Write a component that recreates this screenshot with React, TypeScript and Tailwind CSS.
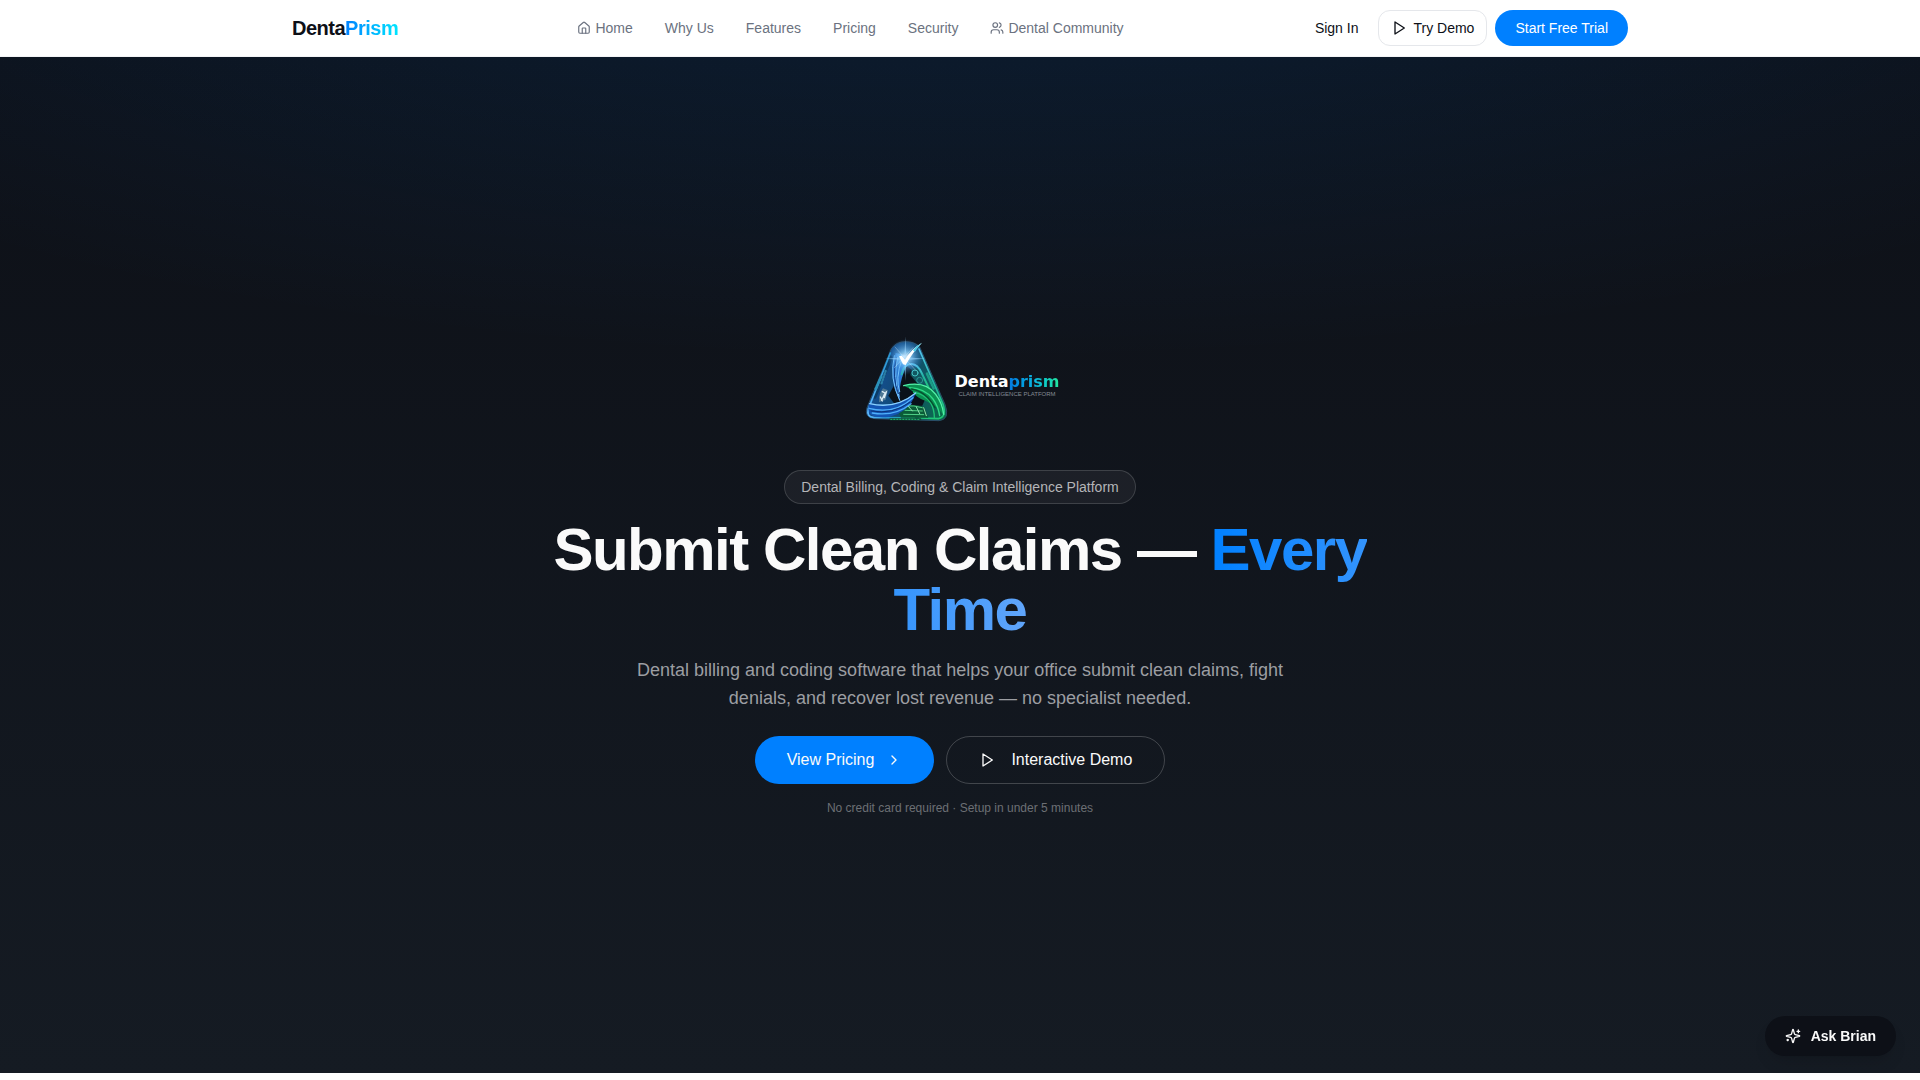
import { ChevronRight, House, Users } from "lucide-react";

const navLinks = [
  { label: "Home", icon: House },
  { label: "Why Us" },
  { label: "Features" },
  { label: "Pricing" },
  { label: "Security" },
  { label: "Dental Community", icon: Users },
];

const PlayIcon = () => (
  <svg
    width="16"
    height="16"
    viewBox="0 0 24 24"
    fill="none"
    stroke="currentColor"
    strokeWidth="2"
    strokeLinecap="round"
    strokeLinejoin="round"
    aria-hidden="true"
  >
    <polygon points="6 3 20 12 6 21 6 3" />
  </svg>
);

const SparklesIcon = () => (
  <svg
    width="16"
    height="16"
    viewBox="0 0 24 24"
    fill="none"
    stroke="currentColor"
    strokeWidth="2"
    strokeLinecap="round"
    strokeLinejoin="round"
    aria-hidden="true"
  >
    <path d="M9.937 15.5A2 2 0 0 0 8.5 14.063l-6.135-1.582a.5.5 0 0 1 0-.962L8.5 9.936A2 2 0 0 0 9.937 8.5l1.582-6.135a.5.5 0 0 1 .963 0L14.063 8.5A2 2 0 0 0 15.5 9.937l6.135 1.581a.5.5 0 0 1 0 .964L15.5 14.063a2 2 0 0 0-1.437 1.437l-1.582 6.135a.5.5 0 0 1-.963 0z" />
    <path d="M20 3v4" />
    <path d="M22 5h-4" />
    <path d="M4 17v2" />
    <path d="M5 18H3" />
  </svg>
);

const PrismMark = () => (
  <svg width="88" height="96" viewBox="30 15 264 288" fill="none" strokeLinecap="round" aria-hidden="true">
    <defs>
      <linearGradient id="body" x1="0" y1="0.4" x2="1" y2="0.7">
        <stop offset="0" stopColor="#14519f" />
        <stop offset="0.45" stopColor="#124a74" />
        <stop offset="1" stopColor="#0b6b4b" />
      </linearGradient>
      <linearGradient id="blade" x1="0" y1="1" x2="1" y2="0">
        <stop offset="0" stopColor="#1550b4" />
        <stop offset="1" stopColor="#3fa4f2" />
      </linearGradient>
      <linearGradient id="rightEdge" x1="0" y1="0" x2="0" y2="1">
        <stop offset="0" stopColor="#54c8ee" />
        <stop offset="0.5" stopColor="#22b3a2" />
        <stop offset="1" stopColor="#20c777" />
      </linearGradient>
      <linearGradient id="base" x1="0" y1="0" x2="1" y2="0">
        <stop offset="0" stopColor="#5db8ff" />
        <stop offset="0.5" stopColor="#2295cf" />
        <stop offset="1" stopColor="#25c97a" />
      </linearGradient>
      <radialGradient id="glow">
        <stop offset="0" stopColor="#fff" />
        <stop offset="0.3" stopColor="#8fd3ff" stopOpacity="0.85" />
        <stop offset="1" stopColor="#2f7fd8" stopOpacity="0" />
      </radialGradient>
    </defs>

    {/* frame and dark opening */}
    <path
      d="M122 70Q136 50 163 50Q192 50 206 66L282 238Q298 284 264 287L72 281Q38 278 48 248Z"
      fill="url(#body)"
      stroke="#2a4d68"
      strokeWidth="3"
    />
    <path d="M163 120L112 212L136 244L214 242L232 200L190 140Z" fill="#0a121a" />

    {/* left arm */}
    <path d="M118 98L70 214" stroke="#0b3c66" strokeWidth="14" />
    <path d="M118 84L52 252Q46 276 68 277L190 279" stroke="url(#base)" strokeWidth="5" />
    <path d="M74 192L92 152" stroke="#2a91b8" strokeWidth="8" strokeDasharray="4 5" />
    <path d="M104 138L90 180" stroke="#2b7fa8" strokeWidth="7" strokeDasharray="3 6" />
    <path d="M96 190L111 196L104 224L84 232Q82 208 96 190Z" fill="#4f7894" />
    <path d="M94 200L102 204L92 226M106 200L100 218M88 216L94 228" stroke="#dcecf5" strokeWidth="4" />
    <path d="M134 84Q110 160 148 230Q138 178 172 112L162 90Z" fill="url(#blade)" />
    <path d="M130 92Q114 160 146 226M140 98Q126 160 144 214M152 106Q132 160 146 200" stroke="#77c7ff" strokeWidth="3" />
    <path d="M136 98Q122 156 142 206" stroke="#0d3a80" strokeWidth="3" />

    {/* right arm */}
    <path d="M204 72L276 238Q288 276 262 281L206 279" stroke="url(#rightEdge)" strokeWidth="5" />
    <path d="M184 130Q200 124 210 144L232 186L200 176L178 150Z" fill="#11565f" />
    <circle cx="192" cy="144" r="9" stroke="#43c2c2" strokeWidth="3" />
    <circle cx="206" cy="166" r="9" stroke="#2a9a94" strokeWidth="3" />
    <path d="M228 146L248 190" stroke="#1b9c86" strokeWidth="8" strokeDasharray="4 5" />
    <path d="M152 148Q158 116 182 117Q200 118 212 144L234 190" stroke="url(#rightEdge)" strokeWidth="6" />
    <path d="M158 182Q222 164 256 206Q278 236 278 270Q256 240 224 228Q196 218 186 200Q176 188 158 182Z" fill="#0b8f52" />
    <path d="M158 182Q222 166 254 208Q274 234 278 268" stroke="#52f0a8" strokeWidth="4" />
    <path d="M176 188Q222 190 246 222Q262 244 266 272" stroke="#2fdc88" strokeWidth="4" />
    <path d="M188 202Q222 206 240 236Q250 254 250 278" stroke="#1fc274" strokeWidth="4" />
    <path d="M182 192Q226 200 252 248" stroke="#06502f" strokeWidth="4" />

    {/* base sweep */}
    <path d="M136 246Q176 232 220 246L232 278L150 278Z" fill="#0a5c38" />
    <path d="M160 243Q190 240 214 248M162 256L214 258M158 268L218 269" stroke="#4fd086" strokeWidth="3" />
    <path d="M172 244L184 258M196 246L206 266M218 248L226 272" stroke="#8fe0ad" strokeWidth="3" />
    <path d="M54 234Q134 252 194 204Q176 262 112 276Q52 282 52 250Z" fill="#1355b4" />
    <path d="M56 236Q134 254 194 204" stroke="#8bd2ff" strokeWidth="4" />
    <path d="M54 250Q130 270 186 218M64 264Q130 276 180 236" stroke="#4fb0fb" strokeWidth="4" />
    <path d="M60 258Q126 270 176 232" stroke="#0c3277" strokeWidth="3" />

    {/* star and tick */}
    <circle cx="163" cy="96" r="54" fill="url(#glow)" opacity="0.9" />
    <path d="M163 34L166 97L224 101L166 105L163 168L160 105L102 101L160 97Z" fill="#9bd6ff" opacity="0.6" />
    <path d="M132 66L194 136M186 68L130 128" stroke="#d9f1ff" strokeWidth="2" opacity="0.5" />
    <path d="M144 94L152 92L162 104Q180 72 213 53Q186 80 164 120L156 118Z" fill="#fff" />
    <path d="M186 76Q198 60 213 53Q202 64 192 80Z" fill="#4fcbe6" />
    <path d="M118 283H208" stroke="#0d4a34" strokeWidth="6" />
    <path d="M118 283H208" stroke="#25bb71" strokeWidth="3" strokeLinecap="butt" strokeDasharray="6 3" />
  </svg>
);

const Header = () => (
  <header className="border-b border-gray-100 bg-white">
    <div className="mx-auto flex h-14 max-w-[1400px] items-center justify-between px-8">
      <a href="#" className="text-xl font-bold tracking-tight text-[#0d1017]">
        Denta
        <span className="bg-linear-to-r from-[#0080ff] to-[#00e5ff] bg-clip-text text-transparent">Prism</span>
      </a>
      <nav className="flex items-center gap-8 text-sm text-[#6b7280]">
        {navLinks.map(({ label, icon: Icon }) => (
          <a key={label} href="#" className="flex items-center gap-1">
            {Icon && <Icon size={14} />}
            {label}
          </a>
        ))}
      </nav>
      <div className="flex items-center gap-2 text-sm text-[#0d1017]">
        <button className="h-9 px-3">Sign In</button>
        <button className="flex h-9 items-center gap-1.5 rounded-xl border border-gray-200 px-3">
          <PlayIcon />
          Try Demo
        </button>
        <button className="h-9 rounded-full bg-[#0080ff] px-5 text-white">Start Free Trial</button>
      </div>
    </div>
  </header>
);

const Hero = () => (
  <section className="flex min-h-[calc(100vh-4rem)] flex-col items-center justify-center bg-[radial-gradient(ellipse_80%_50%_at_50%_-20%,rgba(0,128,255,0.15),transparent),linear-gradient(to_bottom,#0d1017,#151b23)] text-center">
    <div className="mb-7 flex h-32 items-center gap-1.5">
      <PrismMark />
      <div className="flex flex-col items-center pt-4">
        <span className="font-['DejaVu_Sans',sans-serif] text-base leading-4 font-bold text-white">
          Denta
          <span className="bg-linear-to-r from-[#0878e0] via-[#0fb5e0] to-[#27e89a] bg-clip-text text-transparent">
            prism
          </span>
        </span>
        <span className="text-[6px] leading-2 text-[#858b94]">CLAIM INTELLIGENCE PLATFORM</span>
      </div>
    </div>
    <div className="rounded-full border border-white/15 bg-white/5 px-4 py-1.5 text-sm text-[#b4b5b8]">
      Dental Billing, Coding &amp; Claim Intelligence Platform
    </div>
    <h1 className="mt-4 max-w-4xl text-6xl leading-none font-bold tracking-tight text-[#fafafa]">
      Submit Clean Claims —{" "}
      <span className="bg-linear-to-r/srgb from-[#0080ff] to-[#60a5fa] bg-clip-text text-transparent">Every Time</span>
    </h1>
    <p className="mt-4 max-w-2xl text-lg leading-7 text-[#9c9ea2]">
      Dental billing and coding software that helps your office submit clean claims, fight denials, and recover lost
      revenue — no specialist needed.
    </p>
    <div className="mt-6 flex gap-3 text-base text-[#fafafa]">
      <button className="flex h-12 items-center gap-3 rounded-full bg-[#0080ff] px-8">
        View Pricing
        <ChevronRight size={16} />
      </button>
      <button className="flex h-12 items-center gap-4 rounded-full border border-white/20 px-8">
        <PlayIcon />
        Interactive Demo
      </button>
    </div>
    <p className="mt-4 text-xs text-[#6c6f74]">No credit card required · Setup in under 5 minutes</p>
  </section>
);

const App = () => {
  return (
    <div className="min-h-screen bg-white font-['Liberation_Sans',Arial,sans-serif]">
      <Header />
      <Hero />
      <button className="fixed right-6 bottom-6 flex h-10 items-center gap-2.5 rounded-full bg-[#0d1017] px-5 text-sm font-semibold text-[#fafafa] shadow-lg">
        <SparklesIcon />
        Ask Brian
      </button>
    </div>
  );
};

export default App;
